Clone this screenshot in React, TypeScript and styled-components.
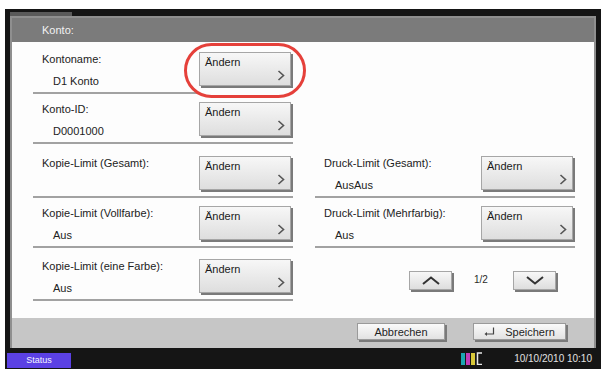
import React from "react";
import styled, { createGlobalStyle } from "styled-components";

const Global = createGlobalStyle`
  html, body { margin: 0; padding: 0; background: #ffffff; }
  body { font-family: "Liberation Sans", Arial, sans-serif; }
`;

const Page = styled.div`
  padding: 9px 0 0 5px;
`;

const Frame = styled.div`
  width: 596px;
  height: 360px;
  background: #151515;
  display: flex;
  flex-direction: column;
`;

const TopStrip = styled.div`
  height: 7px;
  display: flex;
  align-items: flex-end;
  padding-left: 5px;
`;

const Tab = styled.div`
  width: 62px;
  height: 4px;
  background: #5a5a5a;
`;

const Window = styled.div`
  margin: 0 5px;
  border: 2px solid #8f8f8f;
  border-bottom: 0;
  display: flex;
  flex-direction: column;
`;

const Header = styled.div`
  height: 24px;
  background: #7b7b7b;
  color: #f2f2f2;
  font-size: 11px;
  line-height: 24px;
  padding-left: 30px;
`;

const Content = styled.div`
  position: relative;
  height: 276px;
  box-sizing: border-box;
  background: #fdfdfd;
  padding: 0 19px 0 21px;
  display: grid;
  grid-template-columns: 260px 260px;
  column-gap: 22px;
  grid-template-rows: 52px 50px 54px 50px 53px;
  align-content: start;
`;

const Cell = styled.div`
  display: flex;
  align-items: flex-end;
  padding: 0 0 6px 9px;
  border-bottom: 2px solid #a2a2a2;
`;

const EmptyCell = styled.div``;

const LabelBlock = styled.div`
  flex: 1;
  height: 34px;
  display: flex;
  flex-direction: column;
  color: #222;
  font-size: 11px;
  line-height: 14px;
`;

const Label = styled.div``;

const Value = styled.div`
  margin-top: 8px;
  padding-left: 11px;
`;

const ChangeButton = styled.button`
  position: relative;
  z-index: 2;
  width: 92px;
  height: 34px;
  margin: 0 2px 0 0;
  padding: 3px 5px;
  box-sizing: border-box;
  border: 1px solid #a6a6a6;
  background: linear-gradient(#f7f7f7, #dedede);
  box-shadow: 2px 2px 0 #7a7a7a;
  font-family: inherit;
  font-size: 11px;
  line-height: 13px;
  color: #1a1a1a;
  text-align: left;
  display: flex;
  flex-direction: column;
  justify-content: space-between;
`;

const Chevron = styled.svg`
  align-self: flex-end;
  margin: 0 0 1px 0;
`;

const Oval = styled.div`
  position: absolute;
  z-index: 1;
  left: 172px;
  top: 1px;
  width: 122px;
  height: 55px;
  box-sizing: border-box;
  border: 3px solid #e5403a;
  border-radius: 28px;
  background: #fdfdfd;
`;

const PagerCell = styled.div`
  display: flex;
  justify-content: flex-end;
  align-items: flex-end;
  padding: 0 19px 11px 0;
`;

const PagerButton = styled.button`
  width: 43px;
  height: 19px;
  padding: 0;
  box-sizing: border-box;
  border: 1px solid #a6a6a6;
  background: linear-gradient(#f7f7f7, #dedede);
  box-shadow: 2px 2px 0 #7a7a7a;
  display: flex;
  align-items: center;
  justify-content: center;
`;

const PageText = styled.div`
  width: 14px;
  margin: 0 25px 0 22px;
  font-size: 10px;
  line-height: 19px;
  color: #2a2a2a;
  position: relative;
  top: -1px;
`;

const Footer = styled.div`
  height: 30px;
  box-sizing: border-box;
  background: #c6c6c6;
  display: flex;
  justify-content: flex-end;
  align-items: flex-start;
  gap: 28px;
  padding: 5px 28px 0 0;
`;

const FooterButton = styled.button<{ $w: number }>`
  width: ${(p) => p.$w}px;
  height: 17px;
  padding: 0 6px;
  box-sizing: border-box;
  border: 1px solid #9a9a9a;
  background: linear-gradient(#fafafa, #e2e2e2);
  box-shadow: 2px 2px 0 #7a7a7a;
  font-family: inherit;
  font-size: 11px;
  color: #1f1f1f;
  display: flex;
  align-items: center;
  justify-content: center;
  gap: 10px;
`;

const StatusBar = styled.div`
  height: 21px;
  box-sizing: border-box;
  display: flex;
  align-items: flex-end;
  padding: 0 9px 1px 2px;
`;

const StatusTab = styled.div`
  width: 64px;
  height: 15px;
  background: #5b41e4;
  color: #f4f4ff;
  font-size: 9px;
  line-height: 15px;
  text-align: center;
`;

const Spacer = styled.div`
  flex: 1;
`;

const Toner = styled.svg`
  margin: 0 30px 3px 0;
`;

const DateText = styled.div`
  color: #e2e2e2;
  font-size: 10px;
  line-height: 18px;
`;

const ChevronIcon = () => (
  <Chevron width="8" height="11" viewBox="0 0 8 11">
    <path d="M1.5 1 L6.5 5.5 L1.5 10" stroke="#555" strokeWidth="1.6" fill="none" />
  </Chevron>
);

const Change = () => (
  <ChangeButton>
    <span>Ändern</span>
    <ChevronIcon />
  </ChangeButton>
);

type RowProps = { label: string; value?: string };

const SettingRow = ({ label, value }: RowProps) => (
  <Cell>
    <LabelBlock>
      <Label>{label}</Label>
      {value && <Value>{value}</Value>}
    </LabelBlock>
    <Change />
  </Cell>
);

export default function App() {
  return (
    <>
      <Global />
      <Page>
        <Frame>
          <TopStrip>
            <Tab />
          </TopStrip>
          <Window>
            <Header>Konto:</Header>
            <Content>
              <Oval />
              <SettingRow label="Kontoname:" value="D1 Konto" />
              <EmptyCell />
              <SettingRow label="Konto-ID:" value="D0001000" />
              <EmptyCell />
              <SettingRow label="Kopie-Limit (Gesamt):" />
              <SettingRow label="Druck-Limit (Gesamt):" value="AusAus" />
              <SettingRow label="Kopie-Limit (Vollfarbe):" value="Aus" />
              <SettingRow label="Druck-Limit (Mehrfarbig):" value="Aus" />
              <SettingRow label="Kopie-Limit (eine Farbe):" value="Aus" />
              <PagerCell>
                <PagerButton>
                  <svg width="20" height="9" viewBox="0 0 20 9">
                    <path d="M2 8 L10 1.5 L18 8" stroke="#333" strokeWidth="2" fill="none" />
                  </svg>
                </PagerButton>
                <PageText>1/2</PageText>
                <PagerButton>
                  <svg width="20" height="9" viewBox="0 0 20 9">
                    <path d="M2 1 L10 7.5 L18 1" stroke="#333" strokeWidth="2" fill="none" />
                  </svg>
                </PagerButton>
              </PagerCell>
            </Content>
            <Footer>
              <FooterButton $w={88}>Abbrechen</FooterButton>
              <FooterButton $w={93}>
                <svg width="11" height="9" viewBox="0 0 11 9">
                  <path d="M9.5 0.5 V7 H2" stroke="#444" strokeWidth="1.2" fill="none" />
                  <path d="M0.5 7 L3 5 V9 Z" fill="#444" />
                </svg>
                <span>Speichern</span>
              </FooterButton>
            </Footer>
          </Window>
          <StatusBar>
            <StatusTab>Status</StatusTab>
            <Spacer />
            <Toner width="23" height="13" viewBox="0 0 23 13">
              <rect x="0" y="1" width="4" height="12" fill="#1aa6b0" />
              <rect x="5" y="1" width="4" height="12" fill="#c03cb8" />
              <rect x="10" y="1" width="4" height="12" fill="#d8c83a" />
              <path d="M21 1 H16.5 V12.5 H21" stroke="#e8e8e8" strokeWidth="1.5" fill="none" />
            </Toner>
            <DateText>10/10/2010 10:10</DateText>
          </StatusBar>
        </Frame>
      </Page>
    </>
  );
}
